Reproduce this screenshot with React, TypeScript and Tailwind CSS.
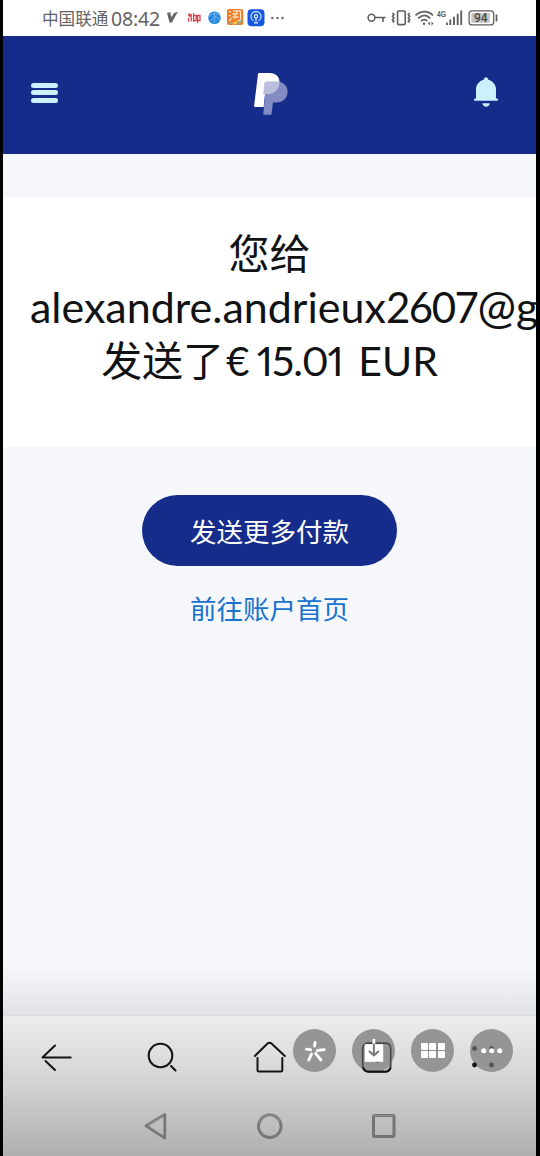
import React from "react";

function StatusBar() {
  return (
    <div className="flex h-9 items-center bg-white pl-[39px] text-[#626262]">
      <div className="flex w-[121px] shrink-0 items-center whitespace-nowrap">
        <span className="w-[69px] text-[16.6px] leading-9 font-['Noto_Sans_CJK_SC',sans-serif]">中国联通</span>
        <span className="mt-px text-[19.5px] leading-9 tracking-[-0.2px] font-['Noto_Sans',sans-serif]">08:42</span>
      </div>
      <svg className="h-6 w-[124px] shrink-0" viewBox="163 6 124 24" fill="none">
        <path d="M167 12.8l3.3-.6.8 5 3.300-4.500 4-.6-2 2.100-4.500 8.300-2.400.2z" fill="#666" />
        <g stroke="#d9444c" strokeWidth="1.300">
          <path d="M189.500 13v4M188 15h4M188.500 18v3.500M191.200 15v6.500M193.600 13v9M193.600 15.500h2.600v5h-2.600M197.600 15v8M197.600 15.500h2.400v5h-2.400" />
        </g>
        <circle cx="214.5" cy="17.8" r="6.3" fill="#2788df" />
        <path d="M209 16l5-3 5.5 2M211 21l4-5 5 4M214 13l1 5-1 5" stroke="#75baf0" strokeWidth="0.9" />
        <rect x="227" y="9" width="16.3" height="16" rx="2" fill="#ec7d2c" />
        <path d="M229 11l2 1.5M229 15l2 1M229 21l3-3M233 11h7.5v9.5h-3M232.5 14h5M235 13v6M232.5 17h6M237 11v3" stroke="#ffe0b3" strokeWidth="1.3" />
        <path d="M229 24.5l3-2M238 24.5l4-5" stroke="#6eb8c8" strokeWidth="1.4" />
        <path d="M233 24l4-2" stroke="#f5d23d" strokeWidth="2" />
        <rect x="247.5" y="9.2" width="17" height="17" rx="4" fill="#1458df" />
        <path d="M253.5 21c-5-4-1.8-9.3 2.5-9.3s7.5 5.3 2.5 9.3" stroke="#c9e0ff" strokeWidth="1.2" />
        <circle cx="256" cy="16.3" r="1.7" stroke="#eef6ff" strokeWidth="1.1" />
        <path d="M256 18v3.5M254 22.8h4" stroke="#eef6ff" strokeWidth="1.2" />
        <g fill="#666">
          <circle cx="272.3" cy="18" r="1.2" />
          <circle cx="277.5" cy="18" r="1.2" />
          <circle cx="282.5" cy="18" r="1.2" />
        </g>
      </svg>
      <svg className="ml-auto mr-[36px] h-6 w-[134px] shrink-0" viewBox="366 6 134 24" fill="none" stroke="#606060" strokeWidth="1.6">
        <circle cx="371.5" cy="17.7" r="3.4" />
        <path d="M375 17.5h10.7M383 17.5v4.5" />
        <rect x="397.6" y="11" width="7.6" height="13.6" rx="1.2" />
        <path d="M392.5 13l1.4 1.6-1.4 1.7 1.4 1.7-1.4 1.7 1.4 1.7-1.4 1M409.7 13l-1.4 1.6 1.4 1.7-1.4 1.7 1.4 1.7-1.4 1.7 1.4 1" strokeWidth="1.6" />
        <path d="M415.5 15.3c5.5-5 12.5-5 17.5 0M418.2 18.3c4-3.6 8.5-3.6 12 0M421 21.2c2.2-1.9 4.5-1.9 6.2 0" strokeWidth="1.7" />
        <circle cx="424" cy="23.7" r="1.2" fill="#606060" stroke="none" />
        <path d="M429.8 21.5l-2 2 2 2zM431.5 21.5l2 2-2 2z" fill="#606060" stroke="none" />
        <text x="437" y="17.2" fill="#555" stroke="none" className="text-[8.5px] font-bold font-['Liberation_Sans',sans-serif]" textLength="9" lengthAdjust="spacingAndGlyphs">4G</text>
        <path d="M446.9 22.5v2.5M450.3 19.5v5.5M454 16.7v8.3M457.7 13.8v11.2M461.2 10.5v14.5" strokeWidth="1.9" />
        <rect x="469.1" y="10.9" width="24.6" height="14" rx="3" strokeWidth="1.3" />
        <rect x="471.3" y="13" width="18.5" height="9.8" fill="#c4c4c4" stroke="none" />
        <text x="474" y="22.2" fill="#484848" stroke="none" className="text-[12px] font-medium font-['Roboto',sans-serif]" textLength="13.5">94</text>
        <path d="M496.5 14.5v7" strokeWidth="1.7" />
      </svg>
    </div>
  );
}

function Header() {
  return (
    <header className="flex h-[118px] items-center justify-between bg-[#152c8b] pr-[38px] pl-7">
      <button aria-label="菜单" className="mt-[-5px] flex w-[26.5px] flex-col gap-[2.5px]">
        <span className="h-[5px] rounded-full bg-[#cdf1ff]" />
        <span className="h-[5px] rounded-full bg-[#cdf1ff]" />
        <span className="h-[5px] rounded-full bg-[#cdf1ff]" />
      </button>
      <svg className="mt-[-2px] ml-[10px] h-[44px] w-9" viewBox="253 72 36 44">
        <path d="M259.5 73h10.5c5.5 0 9.5 3.5 9.5 9 0 7-5 12.3-12 12.3h-2.5l-1.3 12.7h-8.8c-.7 0-.9-.5-.8-1l3.9-32c.1-.7.7-1 1.5-1z" fill="#fff" />
        <path d="M265.5 81.7h13.6c5 1 8.5 5 8.5 9.8 0 6.5-5 11-11 11h-3.6l-1.6 12.2h-7.2c-.7 0-1-.4-.9-1l3-30.6c.1-1 .3-1.4 1.2-1.4z" fill="#848dc3" />
        <path d="M265.5 81.7h14c.2 6.5-4.5 12.4-12 12.4h-4.2l1.1-11.2c.1-.8.4-1.2 1.1-1.2z" fill="#b9bfdd" />
      </svg>
      <svg className="mt-[-6px] h-[32px] w-6" viewBox="473.5 76 24 32" fill="#ccf1fd">
        <path d="M483.2 79.8c.2-3.4 4.4-3.4 4.6 0 4.3 1 7.7 5 7.7 9.5v9.3h1.1c1.1 0 1.1 2.2 0 2.2h-22.1c-1.2 0-1.2-2.2 0-2.2h1v-9.3c0-4.5 3.4-8.5 7.7-9.5z" />
        <path d="M482 103.3h7.2c0 4.5-7.2 4.5-7.2 0z" />
      </svg>
    </header>
  );
}

const circle = "flex h-[43px] w-[43px] items-center justify-center rounded-full bg-[#959595]";

function FloatingActions() {
  return (
    <div className="absolute top-[13px] right-[23px] flex gap-4">
      <div className={circle}>
        <svg className="h-6 w-6" viewBox="0 0 24 24" stroke="#fff" strokeWidth="2.9" strokeLinecap="round">
          <path d="M12.1 3.5l-.6 3.5M3.5 10.1l4.1.6M14.4 11.5l6.8-.9M8.5 15l-2.7 6M12.5 14.4l5.5 6.6" />
        </svg>
      </div>
      <div className={circle}>
        <svg className="h-[43px] w-[43px] overflow-visible" viewBox="352 1029 43 43" fill="none">
          <rect x="362.7" y="1043.2" width="28" height="28.5" rx="5" fill="#959595" stroke="#484848" strokeWidth="1.7" />
          <path d="M363.3 1067.5c.8 2.8 2.5 4.2 5.4 4.2h16.5c3 0 4.7-1.4 5.3-4.2" stroke="#111" strokeWidth="1.9" />
          <path d="M384 1070c2.3-.3 4.2-1.2 5-3" stroke="#ddd" strokeWidth="1" />
          <rect x="364.7" y="1044.2" width="18.5" height="17.6" fill="#fff" />
          <path d="M373.9 1039v6" stroke="#fff" strokeWidth="2.7" />
          <path d="M373.9 1044.5v10.5M369.5 1051.5l4.4 4 4.4-4" stroke="#777" strokeWidth="2" strokeLinecap="round" />
          <circle cx="377.5" cy="1062.5" r=".8" fill="#555" />
        </svg>
      </div>
      <div className={circle}>
        <div className="grid grid-cols-3 gap-[1.5px]">
          {[0, 1, 2, 3, 4, 5].map((n) => (
            <span key={n} className="h-[7px] w-[7px] rounded-[1px] bg-white" />
          ))}
        </div>
      </div>
      <div className={circle}>
        <svg className="h-[43px] w-[43px]" viewBox="470 1029 43 43">
          <g fill="#555">
            <circle cx="474.5" cy="1048.5" r="2.4" />
            <circle cx="491.5" cy="1048.5" r="2.4" />
            <circle cx="491.5" cy="1065" r="2.4" />
          </g>
          <circle cx="474.5" cy="1065" r="2.4" fill="#111" />
          <g fill="#fff">
            <circle cx="483.7" cy="1050.7" r="2.5" />
            <circle cx="491.7" cy="1050.7" r="2.5" />
            <circle cx="499.7" cy="1050.7" r="2.5" />
          </g>
        </svg>
      </div>
    </div>
  );
}

function BrowserToolbar() {
  return (
    <div className="relative grid h-[85px] grid-cols-5 items-center justify-items-center border-t border-[#dcdde0] pb-[2px] text-[#141414]">
      <svg className="h-9 w-9" viewBox="38 1039 36 36" fill="none" stroke="currentColor" strokeWidth="2" strokeLinecap="round">
        <path d="M55 1045.5l-12.5 12h28.2M45.5 1061l9.5 9" strokeLinejoin="round" />
      </svg>
      <svg className="h-9 w-9" viewBox="145 1039 36 36" fill="none" stroke="currentColor" strokeWidth="2.1" strokeLinecap="round">
        <circle cx="160.5" cy="1055.5" r="11.8" />
        <path d="M171 1066l4.5 4.5" />
      </svg>
      <svg className="h-9 w-9" viewBox="251 1039 36 36" fill="none" stroke="currentColor" strokeWidth="2" strokeLinecap="round" strokeLinejoin="round">
        <path d="M254.8 1056l12.500-12.300c1.500-1.300 3-1.300 4.500 0l13 12.300M257.500 1058v12c0 1 .6 1.500 1.500 1.500h21.800c.9 0 1.500-.5 1.500-1.500v-12" />
      </svg>
      <FloatingActions />
    </div>
  );
}

function SystemNavigation() {
  return (
    <div className="flex h-14 items-center justify-center gap-[86px] pb-[4px]">
      <svg className="h-7 w-7" viewBox="142 1112 28 28" fill="none" stroke="#777" strokeWidth="2.8" strokeLinejoin="round">
        <path d="M146 1125.8l18.8-11.3v23.7z" />
        <path d="M148 1125l15-9" stroke="#929292" strokeWidth="1.2" />
      </svg>
      <svg className="h-7 w-7" viewBox="256 1112 28 28" fill="none">
        <circle cx="269.8" cy="1126.2" r="11.3" stroke="#777" strokeWidth="2.8" />
        <path d="M259.5 1122c3.5-9 17-9 20.5 0" stroke="#929292" strokeWidth="1.2" />
      </svg>
      <svg className="h-7 w-7" viewBox="370 1112 28 28" fill="none">
        <rect x="373.5" y="1115.5" width="20.5" height="21" rx="1" stroke="#747474" strokeWidth="3" />
        <path d="M373.5 1115.5h20.5" stroke="#909090" strokeWidth="1.2" />
      </svg>
    </div>
  );
}

export default function App() {
  return (
    <div className="h-[1156px] w-[540px] overflow-hidden bg-black pr-1 pl-[3px]">
      <div className="flex h-full flex-col bg-[#f5f7fb]">
        <StatusBar />
        <Header />
        <main className="flex min-h-0 flex-1 flex-col items-center pt-11">
          <section className="h-[249px] w-full bg-white px-[27px] pt-[29px]">
            <h1 className="text-center text-[41px] leading-[53px] text-[#111214] font-['Lato','Noto_Sans_CJK_SC',sans-serif]">
              <span className="block">您给</span>
              <span className="block w-max whitespace-nowrap text-left text-[43px]">
                alexandre.andrieux
                <span className="text-[42px] tracking-[-1.5px]">2607</span>
                <span className="text-[46px] leading-none">@</span>gmail.com
              </span>
              <span className="block whitespace-nowrap">
                发送了
                <span className="ml-[2px]">
                  <span className="text-[40px] tracking-[-2px]">€</span>
                  <span className="tracking-[-1px] proportional-nums"> 15.01</span>
                  <span className="ml-[5px]"> EUR</span>
                </span>
              </span>
            </h1>
          </section>
          <button className="mt-12 h-[71px] w-[255px] rounded-full bg-[#152c8b] text-[26.5px] leading-[71px] text-white font-['Noto_Sans_CJK_SC',sans-serif]">
            发送更多付款
          </button>
          <a className="mt-[22px] text-[26.5px] leading-10 text-[#1772d0] font-['Noto_Sans_CJK_SC',sans-serif]">前往账户首页</a>
          <div className="mt-auto h-[48px] w-full bg-linear-to-b from-[#f5f7fb] to-[#e1e3e8]" />
        </main>
        <footer className="bg-linear-to-b from-[#edeeec] via-[#d2d2d2] to-[#afafaf]">
          <BrowserToolbar />
          <SystemNavigation />
        </footer>
      </div>
    </div>
  );
}
